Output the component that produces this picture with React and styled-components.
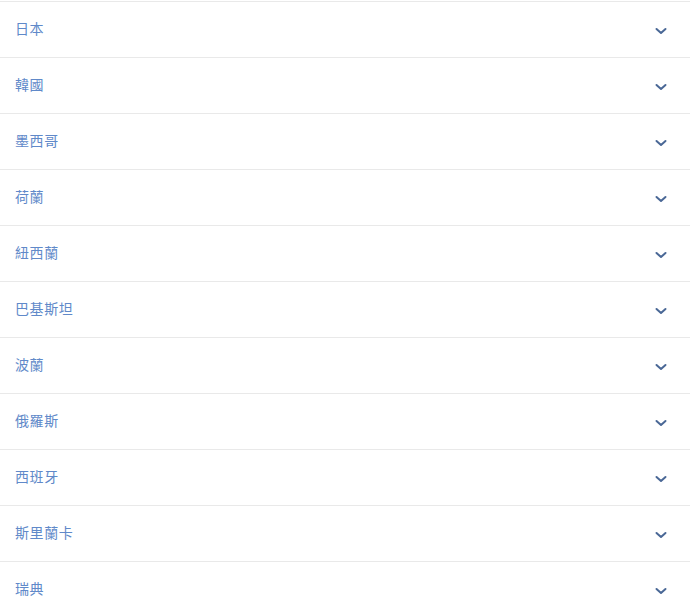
import React from "react";
import styled, { createGlobalStyle } from "styled-components";

const Global = createGlobalStyle`
  html, body { margin: 0; padding: 0; background: #fff; }
  body { font-family: "Noto Sans CJK TC", "Noto Sans", sans-serif; }
`;

const List = styled.div`
  width: 690px;
  padding-top: 1px;
  background: #fff;
`;

const Row = styled.div`
  height: 55px;
  border-top: 1px solid #e9e9e9;
  display: flex;
  align-items: center;
  justify-content: space-between;
  padding: 0 23px 0 15px;
  box-sizing: content-box;
`;

const Label = styled.span`
  font-size: 14px;
  color: #6089c9;
  line-height: 1;
  letter-spacing: 0.6px;
  margin-bottom: 4px;
`;

const Chevron = styled.svg`
  width: 12px;
  height: 8px;
  display: block;
  margin-top: 2px;
`;

const items = ["日本", "韓國", "墨西哥", "荷蘭", "紐西蘭", "巴基斯坦", "波蘭", "俄羅斯", "西班牙", "斯里蘭卡", "瑞典"];

export default function App() {
  return (
    <>
      <Global />
      <List>
        {items.map((t) => (
          <Row key={t}>
            <Label>{t}</Label>
            <Chevron viewBox="0 0 12 8">
              <path d="M1.5 2 L6 6 L10.5 2" fill="none" stroke="#4a6896" strokeWidth="2" strokeLinecap="round" strokeLinejoin="round" />
            </Chevron>
          </Row>
        ))}
      </List>
    </>
  );
}
